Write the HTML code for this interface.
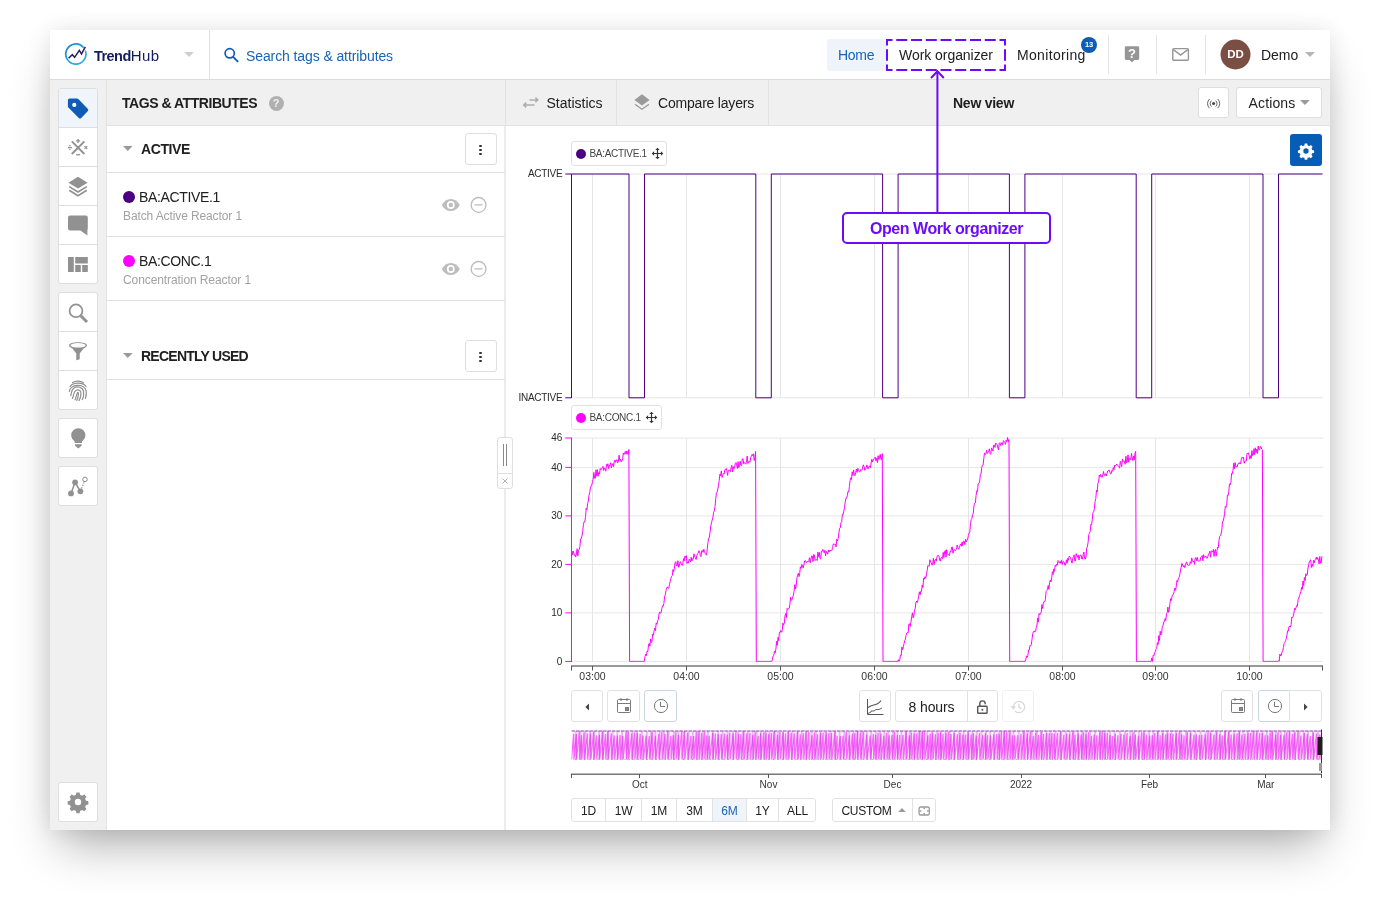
<!DOCTYPE html>
<html lang="en">
<head>
<meta charset="utf-8">
<title>TrendHub</title>
<style>
*{box-sizing:border-box;margin:0;padding:0}
html,body{width:1380px;height:900px;background:#fff;overflow:hidden}
body{position:relative;font-family:"Liberation Sans",sans-serif;color:#202020;font-size:14px}
.a{position:absolute}
#win{left:50px;top:30px;width:1280px;height:800px;background:#fff;box-shadow:0 25px 45px -10px rgba(0,0,0,.31),0 0 22px rgba(0,0,0,.09)}
#hdr{left:50px;top:30px;width:1280px;height:50px;background:#fff;border-bottom:1px solid #dcdcdc}
#side{left:50px;top:80px;width:57px;height:750px;background:#f0f0f0;border-right:1px solid #e2e2e2}
#phead{left:107px;top:80px;width:1223px;height:46px;background:#f0f0f0;border-bottom:1px solid #e2e2e2}
#lpanel{left:107px;top:126px;width:398px;height:704px;background:#fff}
.vdiv{width:1px;background:#e0e0e0}
.hline{height:1px;background:#e2e2e2}
.grp{left:58px;width:40px;background:#fff;border:1px solid #dedede;border-radius:3px;overflow:hidden}
.cell{height:39px;width:38px;border-top:1px solid #dedede;display:flex;align-items:center;justify-content:center}
.cell:first-child{border-top:0;height:38px}
.cell.sel{background:#f0f5fb}
.btn{background:#fff;border:1px solid #dedede;border-radius:3px;display:flex;align-items:center;justify-content:center}
.t{white-space:nowrap;line-height:1}
.rb{top:804.7px;font-size:12px;text-align:center;letter-spacing:-0.2px}
</style>
</head>
<body>
<div id="win" class="a"></div>
<div id="layer" class="a" style="left:0;top:0;width:1380px;height:900px;will-change:transform">
<div id="hdr" class="a"></div>
<div id="side" class="a"></div>
<div id="phead" class="a"></div>
<div id="lpanel" class="a"></div>

<!-- ===== top header ===== -->
<svg class="a" style="left:62px;top:40px" width="28" height="28" viewBox="62 39.5 28 28">
  <defs><linearGradient id="lg" x1="0" y1="0" x2="1" y2="1"><stop offset="0" stop-color="#1b86d2"/><stop offset="1" stop-color="#2bbbe3"/></linearGradient></defs>
  <path d="M83.2 46.6 A10.1 10.1 0 1 0 85.6 50.9" fill="none" stroke="url(#lg)" stroke-width="1.7" stroke-linecap="round"/>
  <path d="M68.6 57.7 L72.3 54.2 L74.6 56.8 L79.3 49.8 L81.5 53.4 L85.3 46.4" fill="none" stroke="#2a215f" stroke-width="1.5" stroke-linejoin="miter"/>
</svg>
<div class="a t" style="left:94px;top:48px;font-size:14.5px;color:#141e5c;letter-spacing:-0.55px"><b>Trend</b><span style="letter-spacing:0.45px;font-size:15px">Hub</span></div>
<svg class="a" style="left:184px;top:52px" width="10" height="5" viewBox="0 0 10 5"><path d="M0 0H10L5 5Z" fill="#cfcfcf"/></svg>
<div class="a vdiv" style="left:209px;top:30px;height:49px;background:#e2e2e2"></div>
<svg class="a" style="left:223px;top:46px" width="18" height="18" viewBox="0 0 18 18"><circle cx="6.7" cy="7.3" r="4.6" fill="none" stroke="#0f5cb6" stroke-width="1.7"/><path d="M10.1 10.8L15.2 15.9" stroke="#0f5cb6" stroke-width="1.9" stroke-linecap="butt"/></svg>
<div class="a t" style="left:246px;top:49px;font-size:14px;color:#1a62b5;letter-spacing:-0.1px">Search tags &amp; attributes</div>

<div class="a" style="left:827px;top:39px;width:60px;height:32px;background:#eff4fa;border-radius:3px"></div>
<div class="a t" style="left:838px;top:48px;font-size:14px;color:#1a62b5;letter-spacing:-0.3px">Home</div>
<div class="a t" style="left:899px;top:48px;font-size:14px;letter-spacing:-0.05px">Work organizer</div>
<div class="a t" style="left:1017px;top:48px;font-size:14px;letter-spacing:0.33px">Monitoring</div>
<div class="a" style="left:1081px;top:37px;width:16px;height:16px;border-radius:8px;background:#0f5cb6"></div>
<div class="a t" style="left:1081px;top:41px;width:16px;text-align:center;font-size:7.5px;font-weight:700;color:#fff;letter-spacing:-0.2px">13</div>
<div class="a vdiv" style="left:1108px;top:35px;height:39px;background:#e4e4e4"></div>
<div class="a vdiv" style="left:1156px;top:35px;height:39px;background:#e4e4e4"></div>
<div class="a vdiv" style="left:1205px;top:35px;height:39px;background:#e4e4e4"></div>
<!-- help -->
<svg class="a" style="left:1123px;top:45px" width="18" height="20" viewBox="0 0 18 20"><path d="M3.2 1.2H14.8A1.4 1.4 0 0 1 16.2 2.6V13.6A1.4 1.4 0 0 1 14.8 15H11.2L9 17.6L6.8 15H3.2A1.4 1.4 0 0 1 1.8 13.6V2.6A1.4 1.4 0 0 1 3.2 1.2Z" fill="#969696"/><text x="9" y="13.2" font-family="Liberation Sans, sans-serif" font-size="13" font-weight="700" fill="#fff" text-anchor="middle">?</text></svg>
<!-- mail -->
<svg class="a" style="left:1171px;top:46px" width="20" height="16" viewBox="0 0 20 16"><rect x="1.8" y="2.6" width="15.6" height="11.6" rx="1" fill="none" stroke="#969696" stroke-width="1.4"/><path d="M2.4 3.6L9.6 9L16.8 3.6" fill="none" stroke="#969696" stroke-width="1.4"/></svg>
<svg class="a" style="left:1218px;top:38px" width="34" height="34" viewBox="0 0 34 34"><circle cx="17.5" cy="16.5" r="15" fill="#7a4e43"/></svg>
<div class="a t" style="left:1220.5px;top:49px;width:30px;text-align:center;font-size:11.5px;font-weight:700;color:#fff">DD</div>
<div class="a t" style="left:1261px;top:48px;font-size:14px;letter-spacing:-0.05px">Demo</div>
<svg class="a" style="left:1305px;top:52px" width="10" height="5" viewBox="0 0 10 5"><path d="M0 0H10L5 5Z" fill="#b5b5b5"/></svg>

<!-- ===== left icon bar ===== -->
<div class="a grp" style="top:88px;height:196px"></div>
<div class="a" style="left:59px;top:89px;width:38px;height:38px;background:#f0f5fb;border-radius:2px 2px 0 0"></div>
<div class="a hline" style="left:59px;top:127px;width:38px;background:#dedede"></div>
<div class="a hline" style="left:59px;top:166px;width:38px;background:#dedede"></div>
<div class="a hline" style="left:59px;top:205px;width:38px;background:#dedede"></div>
<div class="a hline" style="left:59px;top:244px;width:38px;background:#dedede"></div>
<div class="a grp" style="top:292px;height:118px"></div>
<div class="a hline" style="left:59px;top:331px;width:38px;background:#dedede"></div>
<div class="a hline" style="left:59px;top:370px;width:38px;background:#dedede"></div>
<div class="a grp" style="top:418px;height:40px"></div>
<div class="a grp" style="top:466px;height:40px"></div>
<div class="a grp" style="top:782px;height:40px"></div>
<svg class="a" style="left:58px;top:88px" width="40" height="740" viewBox="58 88 40 740">
  <!-- tag -->
  <path d="M69.6 98.6H77.1a1.7 1.7 0 0 1 1.2 .5L87.7 108.8a1.7 1.7 0 0 1 0 2.4L81.2 117.9a1.7 1.7 0 0 1 -2.4 0L68.4 107.6a1.7 1.7 0 0 1 -.5 -1.2V100.3a1.7 1.7 0 0 1 1.7 -1.7Z" fill="#0f5cb6"/>
  <circle cx="74.3" cy="104.9" r="2.1" fill="#fff"/>
  <!-- math cross -->
  <g stroke="#919191" fill="none">
    <path d="M71.8 141.4L84.4 154M84.4 141.4L71.8 154" stroke-width="1.9"/>
    <path d="M76.1 140.9H80.1M78.1 138.9V142.9" stroke-width="1.3"/>
    <path d="M76.1 154.7H80.1" stroke-width="1.3"/>
    <path d="M84.5 146.1L87.3 148.9M87.3 146.1L84.5 148.9" stroke-width="1.2"/>
    <path d="M67.9 147.6H71.9" stroke-width="1.3"/>
  </g>
  <circle cx="69.9" cy="145.8" r=".75" fill="#919191"/><circle cx="69.9" cy="149.4" r=".75" fill="#919191"/>
  <!-- layers -->
  <path d="M78 176.8L87.6 182.7L78 188.6L68.4 182.7Z" fill="#919191"/>
  <path d="M69.2 186.6L78 192L86.8 186.6M69.2 190.3L78 195.7L86.8 190.3" fill="none" stroke="#919191" stroke-width="1.6"/>
  <!-- comment -->
  <path d="M70 215.4H85.8a2 2 0 0 1 2 2V228.6a2 2 0 0 1 -.4 1.2V235.6L80.4 230.6H70a2 2 0 0 1 -2 -2V217.4a2 2 0 0 1 2 -2Z" fill="#919191"/>
  <!-- dashboard -->
  <path d="M68 257h5.8v15H68zM75.2 257h12.6v6.6H75.2zM75.2 265h5.6v7h-5.6zM82.2 265h5.6v7h-5.6z" fill="#919191"/>
  <!-- search -->
  <circle cx="76" cy="310.8" r="6.4" fill="none" stroke="#919191" stroke-width="1.7"/>
  <path d="M80.8 315.8L87 322" stroke="#919191" stroke-width="3" stroke-linecap="butt"/>
  <!-- funnel -->
  <path d="M69 345.5C69 341.3 87 341.3 87 345.5C87 346.6 85.6 347.6 83.6 348.4L79.7 353.4V359.3L76.3 360.2V353.4L72.4 348.4C70.4 347.6 69 346.6 69 345.5Z" fill="#919191"/>
  <ellipse cx="78" cy="345.3" rx="7.6" ry="2.3" fill="#fff"/>
  <!-- fingerprint -->
  <g fill="none" stroke="#919191" stroke-width="1.2" stroke-linecap="round">
    <path d="M72.6 382.6C75.8 380.4 80.6 380.6 83.6 382.9"/>
    <path d="M70 386.6C73.2 382.2 82.6 382 86 386.4"/>
    <path d="M69.4 391.4C69.6 384.2 84.4 382.6 86.2 391C86.6 393.4 86.2 396.2 85.4 398.4"/>
    <path d="M70.8 395.6C71.8 392.8 71 390.4 73.6 388.2C77 385.6 83 387.2 83.6 391.6C84 394.6 83.4 397.2 82.4 399.6"/>
    <path d="M72.4 398.4C74.4 395 73 391.6 76.2 390.2C79 389.2 81.2 391 81 393.6C80.8 396.4 80.2 398.6 79 400.6"/>
    <path d="M75 399.8C76.6 397 76.2 394.6 77.6 392.6C78.4 392.2 78.6 393 78.4 394.4C78.2 396.6 77.8 398.6 76.8 400.4"/>
  </g>
  <!-- bulb -->
  <path d="M78.3 428.2a7.1 7.1 0 0 1 7.1 7.1c0 2.6 -1.5 4.4 -3.4 6.2v1.4h-7.4v-1.4c-1.9 -1.8 -3.4 -3.6 -3.4 -6.2a7.1 7.1 0 0 1 7.1 -7.1Z" fill="#919191"/>
  <path d="M75 444.2h6.6v1.6l-3.3 2.7l-3.3 -2.7Z" fill="#919191"/>
  <!-- graph -->
  <g fill="#919191">
    <circle cx="71" cy="493.4" r="2.9"/><circle cx="75.1" cy="482.3" r="2.9"/><circle cx="80.4" cy="491.3" r="2.9"/>
  </g>
  <path d="M71 493.4L75.1 482.3L80.4 491.3" fill="none" stroke="#919191" stroke-width="1.5"/>
  <path d="M81.6 488.4L84 482.6" fill="none" stroke="#919191" stroke-width="1.3" stroke-dasharray="1.3 1.3"/>
  <circle cx="85" cy="479.4" r="2.3" fill="#fff" stroke="#919191" stroke-width="1"/>
  <!-- gear -->
  <g transform="translate(78 802)">
    <path id="gear" d="M-1.6 -9.5h3.2l.5 2.4a7 7 0 0 1 2 .85l2.1 -1.35l2.25 2.25l-1.35 2.1a7 7 0 0 1 .85 2l2.4 .5v3.2l-2.4 .5a7 7 0 0 1 -.85 2l1.35 2.1l-2.25 2.25l-2.1 -1.35a7 7 0 0 1 -2 .85l-.5 2.4h-3.2l-.5 -2.4a7 7 0 0 1 -2 -.85l-2.1 1.35l-2.25 -2.25l1.35 -2.1a7 7 0 0 1 -.85 -2l-2.4 -.5v-3.2l2.4 -.5a7 7 0 0 1 .85 -2l-1.35 -2.1l2.25 -2.25l2.1 1.35a7 7 0 0 1 2 -.85ZM0 -3.2a3.2 3.2 0 1 0 0 6.4a3.2 3.2 0 1 0 0 -6.4Z" fill="#919191" fill-rule="evenodd"/>
  </g>
</svg>

<!-- ===== tags & attributes panel ===== -->
<div class="a vdiv" style="left:505px;top:80px;height:46px;background:#e2e2e2"></div>
<div class="a" style="left:504px;top:126px;width:2px;height:704px;background:#ececec"></div>
<div class="a t" style="left:122px;top:96px;font-size:14px;font-weight:700;letter-spacing:-0.46px">TAGS &amp; ATTRIBUTES</div>
<div class="a" style="left:268.5px;top:95.5px;width:15px;height:15px;border-radius:7.5px;background:#b0b0b0"></div>
<div class="a t" style="left:268.5px;top:98px;width:15px;text-align:center;font-size:11px;font-weight:700;color:#f0f0f0">?</div>

<svg class="a" style="left:123px;top:146px" width="10" height="5" viewBox="0 0 10 5"><path d="M0 0H9.6L4.8 5Z" fill="#9a9a9a"/></svg>
<div class="a t" style="left:141px;top:142px;font-size:14px;font-weight:700;letter-spacing:-0.39px">ACTIVE</div>
<div class="a btn" style="left:465px;top:133px;width:32px;height:32px"></div>
<div class="a" style="left:479.4px;top:144.8px;width:2.4px;height:2.4px;border-radius:2px;background:#333;box-shadow:0 4px 0 #333,0 8px 0 #333"></div>
<div class="a hline" style="left:107px;top:172px;width:398px"></div>

<div class="a" style="left:122.5px;top:191px;width:12px;height:12px;border-radius:6px;background:#4b0082"></div>
<div class="a t" style="left:139px;top:190px;font-size:14px;letter-spacing:-0.35px">BA:ACTIVE.1</div>
<div class="a t" style="left:123px;top:210px;font-size:12px;color:#a2a2a2;letter-spacing:-0.11px">Batch Active Reactor 1</div>
<svg class="a" style="left:441px;top:196px" width="48" height="18" viewBox="441 196 48 18">
  <path d="M441.8 205C444 201 447 198.9 450.8 198.9C454.6 198.9 457.6 201 459.8 205C457.6 209 454.6 211.1 450.8 211.1C447 211.1 444 209 441.8 205Z" fill="#bdbdbd"/>
  <circle cx="450.8" cy="205" r="3.9" fill="#fff"/><circle cx="450.8" cy="205" r="2.2" fill="#bdbdbd"/>
  <circle cx="478.6" cy="204.9" r="7.4" fill="none" stroke="#bdbdbd" stroke-width="1.3"/><path d="M474.6 204.9H482.6" stroke="#bdbdbd" stroke-width="1.3"/>
</svg>
<div class="a hline" style="left:107px;top:236px;width:398px"></div>

<div class="a" style="left:122.5px;top:255px;width:12px;height:12px;border-radius:6px;background:#ff00ff"></div>
<div class="a t" style="left:139px;top:254px;font-size:14px;letter-spacing:-0.35px">BA:CONC.1</div>
<div class="a t" style="left:123px;top:274px;font-size:12px;color:#a2a2a2;letter-spacing:-0.09px">Concentration Reactor 1</div>
<svg class="a" style="left:441px;top:260px" width="48" height="18" viewBox="441 196 48 18">
  <path d="M441.8 205C444 201 447 198.9 450.8 198.9C454.6 198.9 457.6 201 459.8 205C457.6 209 454.6 211.1 450.8 211.1C447 211.1 444 209 441.8 205Z" fill="#bdbdbd"/>
  <circle cx="450.8" cy="205" r="3.9" fill="#fff"/><circle cx="450.8" cy="205" r="2.2" fill="#bdbdbd"/>
  <circle cx="478.6" cy="204.9" r="7.4" fill="none" stroke="#bdbdbd" stroke-width="1.3"/><path d="M474.6 204.9H482.6" stroke="#bdbdbd" stroke-width="1.3"/>
</svg>
<div class="a hline" style="left:107px;top:300px;width:398px"></div>

<svg class="a" style="left:123px;top:353px" width="10" height="5" viewBox="0 0 10 5"><path d="M0 0H9.6L4.8 5Z" fill="#9a9a9a"/></svg>
<div class="a t" style="left:141px;top:349px;font-size:14px;font-weight:700;letter-spacing:-0.75px">RECENTLY USED</div>
<div class="a btn" style="left:465px;top:340px;width:32px;height:32px"></div>
<div class="a" style="left:479.4px;top:351.8px;width:2.4px;height:2.4px;border-radius:2px;background:#333;box-shadow:0 4px 0 #333,0 8px 0 #333"></div>
<div class="a hline" style="left:107px;top:379px;width:398px"></div>

<!-- splitter handle -->
<div class="a" style="left:497px;top:437px;width:16px;height:52px;background:#fff;border:1px solid #dedede;border-radius:3px"></div>
<div class="a hline" style="left:498px;top:473px;width:14px;background:#dedede"></div>
<div class="a" style="left:503px;top:444px;width:1px;height:22px;background:#8a8a8a"></div>
<div class="a" style="left:506px;top:444px;width:1px;height:22px;background:#8a8a8a"></div>
<svg class="a" style="left:501px;top:477px" width="8" height="8" viewBox="0 0 8 8"><path d="M1.5 1.5L6.5 6.5M6.5 1.5L1.5 6.5" stroke="#a8a8a8" stroke-width=".9"/></svg>

<!-- ===== chart toolbar ===== -->
<div class="a vdiv" style="left:616px;top:80px;height:45px;background:#e2e2e2"></div>
<div class="a vdiv" style="left:768px;top:80px;height:45px;background:#e2e2e2"></div>
<svg class="a" style="left:522px;top:95px" width="18" height="14" viewBox="522 95 18 14"><g fill="none" stroke="#adadad" stroke-width="1.5"><path d="M529.5 99.9H537.6M535.4 97.5L537.8 99.9L535.4 102.3"/><path d="M534.5 105H524M526.2 102.6L523.8 105L526.2 107.4"/></g></svg>
<div class="a t" style="left:546.5px;top:96px;font-size:14px">Statistics</div>
<svg class="a" style="left:633px;top:93px" width="18" height="18" viewBox="633 93 18 18"><path d="M642 94.3L649.6 99.9L642 105.5L634.4 99.9Z" fill="#9a9a9a"/><path d="M635 104.2L642 109.3L649 104.2" fill="none" stroke="#9a9a9a" stroke-width="1.3"/></svg>
<div class="a t" style="left:658px;top:96px;font-size:14px;letter-spacing:-0.2px">Compare layers</div>
<div class="a t" style="left:953px;top:96px;font-size:14px;font-weight:700;letter-spacing:-0.25px">New view</div>
<div class="a btn" style="left:1198px;top:87px;width:31px;height:31px;border-color:#dedede"></div>
<svg class="a" style="left:1205px;top:96px" width="18" height="16" viewBox="1205 96 18 16"><circle cx="1213.6" cy="103.6" r="1.5" fill="#444"/><g fill="none" stroke="#555" stroke-width=".9" stroke-linecap="round"><path d="M1211.2 100.9A3.7 3.7 0 0 0 1211.2 106.3M1216 100.9A3.7 3.7 0 0 1 1216 106.3"/><path d="M1209.2 99.3A6 6 0 0 0 1209.2 107.9M1218 99.3A6 6 0 0 1 1218 107.9"/></g></svg>
<div class="a btn" style="left:1236px;top:87px;width:86px;height:31px;border-color:#dedede"></div>
<div class="a t" style="left:1248.5px;top:96px;font-size:14px;letter-spacing:0.15px">Actions</div>
<svg class="a" style="left:1300px;top:100px" width="10" height="5" viewBox="0 0 10 5"><path d="M0 0H9.8L4.9 5Z" fill="#9a9a9a"/></svg>
<div class="a" style="left:1290px;top:134px;width:32px;height:32px;border-radius:3px;background:#075db5"></div>
<svg class="a" style="left:1296px;top:141px" width="20" height="20" viewBox="-10 -10 20 20"><path transform="scale(0.78)" d="M-1.6 -9.5h3.2l.5 2.4a7 7 0 0 1 2 .85l2.1 -1.35l2.25 2.25l-1.35 2.1a7 7 0 0 1 .85 2l2.4 .5v3.2l-2.4 .5a7 7 0 0 1 -.85 2l1.35 2.1l-2.25 2.25l-2.1 -1.35a7 7 0 0 1 -2 .85l-.5 2.4h-3.2l-.5 -2.4a7 7 0 0 1 -2 -.85l-2.1 1.35l-2.25 -2.25l1.35 -2.1a7 7 0 0 1 -.85 -2l-2.4 -.5v-3.2l2.4 -.5a7 7 0 0 1 .85 -2l-1.35 -2.1l2.25 -2.25l2.1 1.35a7 7 0 0 1 2 -.85ZM0 -3.4a3.4 3.4 0 1 0 0 6.8a3.4 3.4 0 1 0 0 -6.8Z" fill="#fff" fill-rule="evenodd"/></svg>

<!-- ===== charts ===== -->
<svg class="a" style="left:506px;top:126px" width="824" height="704" viewBox="506 126 824 704" font-family="Liberation Sans, sans-serif">
  <!-- grid chart 1 -->
  <g stroke="#e6e6e6" stroke-width="1" fill="none">
    <path d="M592.5 174V397.8M686.5 174V397.8M780.5 174V397.8M874.5 174V397.8M968.5 174V397.8M1062.5 174V397.8M1155.5 174V397.8M1249.5 174V397.8"/>
    <path d="M571 174H1323M571 397.8H1323"/>
    <path d="M592.5 438V661.4M686.5 438V661.4M780.5 438V661.4M874.5 438V661.4M968.5 438V661.4M1062.5 438V661.4M1155.5 438V661.4M1249.5 438V661.4"/>
    <path d="M571 438H1323M571 467.4H1323M571 515.9H1323M571 564.4H1323M571 612.9H1323M571 661.4H1323"/>
  </g>
  <!-- y ticks -->
  <path d="M565.3 174H571.5M565.3 397.8H571.5" stroke="#4b0082" stroke-width="1" fill="none"/>
  <path d="M571.5 174V397.8" stroke="#4b0082" stroke-width="1" fill="none" opacity=".5"/>
  <path d="M565.3 438H571.5M565.3 467.4H571.5M565.3 515.9H571.5M565.3 564.4H571.5M565.3 612.9H571.5M565.3 661.4H571.5" stroke="#ff00ff" stroke-width="1" fill="none"/>
  <path d="M571.5 437.5V662" stroke="#ff00ff" stroke-width="1" fill="none"/>
  <g font-size="10" fill="#2a2a2a" text-anchor="end">
    <text x="562.3" y="177.4" letter-spacing="-0.3">ACTIVE</text>
    <text x="562.3" y="401.2" letter-spacing="-0.3">INACTIVE</text>
    <text x="562.3" y="441.4">46</text>
    <text x="562.3" y="470.8">40</text>
    <text x="562.3" y="519.3">30</text>
    <text x="562.3" y="567.8">20</text>
    <text x="562.3" y="616.3">10</text>
    <text x="562.3" y="664.8">0</text>
  </g>
  <!-- series -->
  <path d="M571.5 397.8 L571.5 174.0 L629.0 174.0 L629.0 397.8 L644.5 397.8 L644.5 174.0 L755.8 174.0 L755.8 397.8 L771.3 397.8 L771.3 174.0 L882.6 174.0 L882.6 397.8 L898.1 397.8 L898.1 174.0 L1009.4 174.0 L1009.4 397.8 L1024.9 397.8 L1024.9 174.0 L1136.2 174.0 L1136.2 397.8 L1151.7 397.8 L1151.7 174.0 L1263.0 174.0 L1263.0 397.8 L1278.5 397.8 L1278.5 174.0 L1322.5 174.0" fill="none" stroke="#4b0082" stroke-width="1" stroke-linejoin="miter"/>
  <path d="M571.5 551.8 L572.2 555.2 L572.9 551.0 L573.6 552.1 L574.3 555.3 L575.0 554.7 L575.7 557.0 L576.4 553.9 L577.1 548.7 L577.8 555.9 L578.5 550.3 L579.2 549.8 L579.9 546.4 L580.6 539.0 L581.3 538.2 L582.0 535.9 L582.7 531.6 L583.4 524.7 L584.1 521.6 L584.8 521.9 L585.5 516.8 L586.2 508.2 L586.9 509.7 L587.6 503.8 L588.3 501.2 L589.0 495.2 L589.7 492.8 L590.4 488.0 L591.1 486.1 L591.8 484.9 L592.5 481.4 L593.2 479.3 L593.9 472.4 L594.6 478.2 L595.3 478.5 L596.0 469.8 L596.7 476.1 L597.4 469.6 L598.1 476.2 L598.8 472.5 L599.5 474.1 L600.2 468.4 L600.9 469.8 L601.6 469.2 L602.3 467.7 L603.0 466.3 L603.7 470.4 L604.4 467.8 L605.1 468.7 L605.8 471.2 L606.5 464.4 L607.2 466.1 L607.9 463.7 L608.6 468.6 L609.3 465.3 L610.0 465.5 L610.7 462.7 L611.4 468.0 L612.1 465.2 L612.8 463.6 L613.5 466.7 L614.2 462.1 L614.9 460.1 L615.6 462.4 L616.3 460.0 L617.0 459.9 L617.7 462.9 L618.4 461.2 L619.1 455.2 L619.8 460.5 L620.5 459.2 L621.2 461.8 L621.9 460.2 L622.6 460.2 L623.3 453.1 L624.0 454.5 L624.7 452.7 L625.4 451.3 L626.1 454.2 L626.8 450.9 L627.5 454.0 L628.2 454.5 L628.9 449.5 L629.6 661.4 L630.3 661.4 L631.0 661.4 L631.7 661.4 L632.4 661.4 L633.1 661.4 L633.8 661.4 L634.5 661.4 L635.2 661.4 L635.9 661.4 L636.6 661.4 L637.3 661.4 L638.0 661.4 L638.7 661.4 L639.4 661.4 L640.1 661.4 L640.8 661.4 L641.5 661.4 L642.2 661.4 L642.9 661.4 L643.6 661.4 L644.3 661.4 L645.0 656.7 L645.7 654.2 L646.4 655.6 L647.1 651.1 L647.8 651.8 L648.5 645.0 L649.2 643.4 L649.9 646.1 L650.6 638.9 L651.3 642.6 L652.0 641.1 L652.7 634.0 L653.4 635.1 L654.1 631.2 L654.8 628.1 L655.5 630.5 L656.2 622.9 L656.9 624.3 L657.6 620.9 L658.3 619.4 L659.0 614.2 L659.7 611.9 L660.4 613.3 L661.1 612.5 L661.8 608.8 L662.5 605.8 L663.2 606.2 L663.9 603.4 L664.6 596.5 L665.3 594.8 L666.0 590.4 L666.7 588.2 L667.4 586.8 L668.1 588.5 L668.8 588.0 L669.5 584.6 L670.2 581.3 L670.9 578.6 L671.6 576.3 L672.3 575.5 L673.0 569.5 L673.7 571.7 L674.4 568.1 L675.1 562.6 L675.8 561.6 L676.5 565.7 L677.2 565.9 L677.9 560.7 L678.6 567.3 L679.3 566.0 L680.0 562.2 L680.7 561.8 L681.4 564.8 L682.1 565.5 L682.8 563.8 L683.5 558.6 L684.2 560.9 L684.9 556.2 L685.6 557.6 L686.3 555.6 L687.0 563.5 L687.7 561.9 L688.4 563.1 L689.1 559.1 L689.8 559.6 L690.5 561.9 L691.2 557.2 L691.9 560.9 L692.6 558.7 L693.3 558.9 L694.0 553.8 L694.7 556.8 L695.4 557.9 L696.1 559.5 L696.8 555.8 L697.5 553.8 L698.2 553.1 L698.9 550.7 L699.6 551.3 L700.3 555.9 L701.0 556.6 L701.7 550.8 L702.4 550.3 L703.1 552.4 L703.8 549.3 L704.5 551.4 L705.2 553.5 L705.9 554.2 L706.6 555.2 L707.3 548.1 L708.0 542.3 L708.7 538.2 L709.4 537.2 L710.1 531.8 L710.8 525.9 L711.5 522.7 L712.2 520.1 L712.9 517.3 L713.6 512.5 L714.3 510.8 L715.0 506.7 L715.7 499.3 L716.4 493.1 L717.1 492.1 L717.8 489.0 L718.5 485.3 L719.2 480.6 L719.9 474.2 L720.6 475.7 L721.3 470.9 L722.0 477.5 L722.7 475.7 L723.4 473.5 L724.1 474.1 L724.8 469.8 L725.5 469.7 L726.2 468.4 L726.9 470.7 L727.6 475.4 L728.3 470.3 L729.0 470.1 L729.7 470.2 L730.4 471.6 L731.1 467.5 L731.8 465.3 L732.5 472.0 L733.2 466.7 L733.9 468.9 L734.6 467.2 L735.3 463.5 L736.0 462.5 L736.7 464.9 L737.4 468.4 L738.1 461.7 L738.8 467.7 L739.5 465.6 L740.2 461.3 L740.9 465.4 L741.6 465.4 L742.3 459.0 L743.0 458.7 L743.7 463.8 L744.4 462.7 L745.1 463.3 L745.8 464.2 L746.5 462.7 L747.2 456.0 L747.9 463.4 L748.6 461.7 L749.3 461.6 L750.0 462.2 L750.7 457.9 L751.4 455.7 L752.1 454.4 L752.8 455.8 L753.5 453.8 L754.2 460.5 L754.9 457.7 L755.6 451.4 L756.3 661.4 L757.0 661.4 L757.7 661.4 L758.4 661.4 L759.1 661.4 L759.8 661.4 L760.5 661.4 L761.2 661.4 L761.9 661.4 L762.6 661.4 L763.3 661.4 L764.0 661.4 L764.7 661.4 L765.4 661.4 L766.1 661.4 L766.8 661.4 L767.5 661.4 L768.2 661.4 L768.9 661.4 L769.6 661.4 L770.3 661.4 L771.0 661.4 L771.7 661.4 L772.4 659.8 L773.1 655.9 L773.8 655.4 L774.5 651.0 L775.2 652.7 L775.9 649.1 L776.6 641.3 L777.3 645.4 L778.0 637.3 L778.7 640.7 L779.4 632.2 L780.1 632.5 L780.8 630.5 L781.5 632.3 L782.2 630.8 L782.9 623.1 L783.6 625.4 L784.3 623.1 L785.0 616.0 L785.7 613.4 L786.4 617.7 L787.1 608.4 L787.8 609.5 L788.5 608.5 L789.2 608.4 L789.9 604.1 L790.6 597.2 L791.3 600.5 L792.0 599.5 L792.7 597.2 L793.4 595.1 L794.1 591.2 L794.8 584.6 L795.5 589.0 L796.2 585.9 L796.9 577.9 L797.6 575.3 L798.3 573.2 L799.0 576.7 L799.7 573.7 L800.4 566.8 L801.1 568.3 L801.8 564.4 L802.5 565.9 L803.2 568.1 L803.9 564.9 L804.6 561.0 L805.3 560.4 L806.0 561.9 L806.7 562.4 L807.4 561.4 L808.1 561.9 L808.8 560.7 L809.5 557.7 L810.2 562.9 L810.9 559.1 L811.6 555.8 L812.3 556.1 L813.0 561.6 L813.7 554.4 L814.4 555.1 L815.1 560.6 L815.8 559.4 L816.5 559.6 L817.2 560.5 L817.9 552.1 L818.6 556.7 L819.3 552.3 L820.0 558.5 L820.7 559.1 L821.4 551.2 L822.1 551.5 L822.8 549.4 L823.5 551.7 L824.2 552.8 L824.9 550.3 L825.6 555.8 L826.3 551.5 L827.0 552.0 L827.7 554.2 L828.4 549.9 L829.1 552.0 L829.8 550.0 L830.5 550.8 L831.2 550.9 L831.9 550.2 L832.6 547.7 L833.3 544.0 L834.0 544.1 L834.7 544.4 L835.4 544.2 L836.1 547.0 L836.8 539.2 L837.5 540.9 L838.2 538.7 L838.9 533.0 L839.6 528.3 L840.3 527.8 L841.0 522.6 L841.7 521.9 L842.4 514.2 L843.1 514.5 L843.8 511.2 L844.5 507.7 L845.2 502.2 L845.9 498.3 L846.6 498.3 L847.3 495.7 L848.0 491.4 L848.7 492.0 L849.4 486.4 L850.1 480.4 L850.8 477.8 L851.5 479.5 L852.2 471.8 L852.9 475.5 L853.6 469.9 L854.3 474.8 L855.0 475.7 L855.7 472.3 L856.4 469.0 L857.1 472.5 L857.8 468.3 L858.5 469.2 L859.2 471.8 L859.9 471.9 L860.6 469.7 L861.3 470.2 L862.0 470.0 L862.7 467.1 L863.4 464.8 L864.1 466.9 L864.8 470.3 L865.5 469.2 L866.2 467.4 L866.9 464.9 L867.6 468.6 L868.3 468.7 L869.0 466.2 L869.7 466.1 L870.4 467.8 L871.1 463.0 L871.8 459.2 L872.5 462.1 L873.2 459.9 L873.9 458.7 L874.6 458.2 L875.3 457.1 L876.0 460.8 L876.7 458.3 L877.4 462.7 L878.1 455.7 L878.8 459.6 L879.5 458.4 L880.2 454.3 L880.9 459.2 L881.6 459.6 L882.3 453.6 L883.0 661.4 L883.7 661.4 L884.4 661.4 L885.1 661.4 L885.8 661.4 L886.5 661.4 L887.2 661.4 L887.9 661.4 L888.6 661.4 L889.3 661.4 L890.0 661.4 L890.7 661.4 L891.4 661.4 L892.1 661.4 L892.8 661.4 L893.5 661.4 L894.2 661.4 L894.9 661.4 L895.6 661.4 L896.3 661.4 L897.0 661.4 L897.7 661.4 L898.4 659.7 L899.1 661.4 L899.8 659.7 L900.5 655.0 L901.2 655.5 L901.9 646.9 L902.6 649.8 L903.3 646.9 L904.0 643.8 L904.7 640.7 L905.4 639.1 L906.1 635.4 L906.8 632.9 L907.5 632.5 L908.2 632.9 L908.9 623.9 L909.6 623.9 L910.3 626.5 L911.0 621.5 L911.7 616.9 L912.4 612.8 L913.1 617.8 L913.8 616.1 L914.5 610.2 L915.2 608.5 L915.9 602.6 L916.6 601.0 L917.3 602.6 L918.0 599.8 L918.7 596.3 L919.4 591.8 L920.1 594.9 L920.8 591.2 L921.5 591.4 L922.2 584.9 L922.9 587.5 L923.6 578.2 L924.3 579.2 L925.0 576.7 L925.7 578.3 L926.4 574.9 L927.1 570.9 L927.8 565.7 L928.5 566.0 L929.2 566.2 L929.9 559.7 L930.6 562.0 L931.3 562.8 L932.0 565.2 L932.7 563.9 L933.4 558.2 L934.1 564.5 L934.8 560.5 L935.5 559.3 L936.2 561.2 L936.9 557.1 L937.6 555.5 L938.3 555.5 L939.0 556.1 L939.7 560.3 L940.4 561.1 L941.1 557.4 L941.8 558.0 L942.5 558.6 L943.2 552.3 L943.9 557.6 L944.6 551.8 L945.3 550.4 L946.0 557.1 L946.7 549.7 L947.4 553.8 L948.1 554.9 L948.8 554.7 L949.5 555.6 L950.2 551.1 L950.9 551.7 L951.6 547.2 L952.3 546.9 L953.0 553.2 L953.7 549.8 L954.4 549.4 L955.1 550.8 L955.8 549.8 L956.5 549.2 L957.2 545.0 L957.9 547.7 L958.6 549.2 L959.3 547.8 L960.0 545.4 L960.7 543.9 L961.4 546.3 L962.1 541.9 L962.8 545.7 L963.5 541.2 L964.2 541.3 L964.9 544.7 L965.6 539.2 L966.3 541.9 L967.0 540.2 L967.7 539.0 L968.4 535.3 L969.1 533.0 L969.8 532.1 L970.5 523.6 L971.2 519.6 L971.9 518.6 L972.6 514.5 L973.3 513.1 L974.0 505.3 L974.7 503.2 L975.4 502.9 L976.1 495.3 L976.8 490.7 L977.5 491.5 L978.2 483.6 L978.9 483.5 L979.6 482.1 L980.3 474.9 L981.0 474.0 L981.7 467.8 L982.4 465.3 L983.1 465.0 L983.8 458.6 L984.5 452.9 L985.2 454.6 L985.9 453.6 L986.6 450.3 L987.3 453.5 L988.0 452.6 L988.7 451.3 L989.4 448.8 L990.1 453.7 L990.8 454.2 L991.5 447.9 L992.2 449.3 L992.9 451.0 L993.6 445.4 L994.3 445.0 L995.0 447.5 L995.7 443.1 L996.4 444.0 L997.1 444.3 L997.8 447.8 L998.5 449.8 L999.2 443.5 L999.9 442.6 L1000.6 445.5 L1001.3 443.9 L1002.0 442.6 L1002.7 444.9 L1003.4 440.6 L1004.1 441.3 L1004.8 442.4 L1005.5 444.3 L1006.2 440.0 L1006.9 441.5 L1007.6 437.5 L1008.3 441.9 L1009.0 439.5 L1009.7 661.4 L1010.4 661.4 L1011.1 661.4 L1011.8 661.4 L1012.5 661.4 L1013.2 661.4 L1013.9 661.4 L1014.6 661.4 L1015.3 661.4 L1016.0 661.4 L1016.7 661.4 L1017.4 661.4 L1018.1 661.4 L1018.8 661.4 L1019.5 661.4 L1020.2 661.4 L1020.9 661.4 L1021.6 661.4 L1022.3 661.4 L1023.0 661.4 L1023.7 661.4 L1024.4 661.4 L1025.1 661.4 L1025.8 659.3 L1026.5 655.8 L1027.2 657.3 L1027.9 655.5 L1028.6 650.0 L1029.3 649.9 L1030.0 645.4 L1030.7 645.8 L1031.4 644.2 L1032.1 638.6 L1032.8 633.4 L1033.5 631.6 L1034.2 632.2 L1034.9 630.9 L1035.6 631.3 L1036.3 627.5 L1037.0 625.0 L1037.7 617.9 L1038.4 622.1 L1039.1 613.5 L1039.8 615.0 L1040.5 613.1 L1041.2 612.2 L1041.9 604.6 L1042.6 608.5 L1043.3 603.3 L1044.0 601.6 L1044.7 601.8 L1045.4 599.4 L1046.1 591.3 L1046.8 590.6 L1047.5 588.9 L1048.2 585.4 L1048.9 589.4 L1049.6 582.5 L1050.3 580.0 L1051.0 581.9 L1051.7 577.9 L1052.4 571.7 L1053.1 574.5 L1053.8 568.9 L1054.5 571.4 L1055.2 565.3 L1055.9 566.4 L1056.6 564.1 L1057.3 565.1 L1058.0 560.5 L1058.7 561.4 L1059.4 563.2 L1060.1 561.4 L1060.8 563.4 L1061.5 559.9 L1062.2 564.5 L1062.9 561.8 L1063.6 561.2 L1064.3 562.7 L1065.0 565.4 L1065.7 564.1 L1066.4 559.8 L1067.1 563.3 L1067.8 558.3 L1068.5 560.3 L1069.2 556.1 L1069.9 556.8 L1070.6 557.7 L1071.3 560.5 L1072.0 563.2 L1072.7 558.5 L1073.4 556.6 L1074.1 554.8 L1074.8 560.9 L1075.5 561.0 L1076.2 553.6 L1076.9 555.5 L1077.6 557.5 L1078.3 555.1 L1079.0 560.0 L1079.7 556.3 L1080.4 555.0 L1081.1 555.3 L1081.8 559.0 L1082.5 559.0 L1083.2 554.5 L1083.9 552.0 L1084.6 558.3 L1085.3 559.2 L1086.0 557.0 L1086.7 548.1 L1087.4 546.8 L1088.1 542.3 L1088.8 534.6 L1089.5 533.1 L1090.2 531.4 L1090.9 524.4 L1091.6 525.1 L1092.3 519.2 L1093.0 512.3 L1093.7 511.8 L1094.4 508.7 L1095.1 501.4 L1095.8 498.6 L1096.5 490.2 L1097.2 492.0 L1097.9 483.2 L1098.6 482.0 L1099.3 475.1 L1100.0 476.7 L1100.7 474.4 L1101.4 476.9 L1102.1 477.4 L1102.8 475.0 L1103.5 471.5 L1104.2 475.1 L1104.9 475.6 L1105.6 473.6 L1106.3 476.0 L1107.0 473.6 L1107.7 470.9 L1108.4 470.8 L1109.1 469.9 L1109.8 472.1 L1110.5 474.0 L1111.2 473.6 L1111.9 470.4 L1112.6 471.3 L1113.3 467.6 L1114.0 469.8 L1114.7 465.1 L1115.4 466.0 L1116.1 465.1 L1116.8 464.0 L1117.5 465.5 L1118.2 465.9 L1118.9 466.5 L1119.6 468.2 L1120.3 461.4 L1121.0 463.5 L1121.7 466.6 L1122.4 458.9 L1123.1 461.5 L1123.8 460.7 L1124.5 461.9 L1125.2 464.2 L1125.9 456.2 L1126.6 463.0 L1127.3 460.9 L1128.0 454.9 L1128.7 462.2 L1129.4 458.4 L1130.1 458.2 L1130.8 459.8 L1131.5 453.4 L1132.2 457.5 L1132.9 460.6 L1133.6 456.1 L1134.3 459.8 L1135.0 453.2 L1135.7 451.4 L1136.4 661.4 L1137.1 661.4 L1137.8 661.4 L1138.5 661.4 L1139.2 661.4 L1139.9 661.4 L1140.6 661.4 L1141.3 661.4 L1142.0 661.4 L1142.7 661.4 L1143.4 661.4 L1144.1 661.4 L1144.8 661.4 L1145.5 661.4 L1146.2 661.4 L1146.9 661.4 L1147.6 661.4 L1148.3 661.4 L1149.0 661.4 L1149.7 661.4 L1150.4 661.4 L1151.1 661.4 L1151.8 657.9 L1152.5 661.4 L1153.2 655.3 L1153.9 656.0 L1154.6 652.5 L1155.3 651.7 L1156.0 649.5 L1156.7 648.6 L1157.4 642.6 L1158.1 644.6 L1158.8 635.6 L1159.5 640.5 L1160.2 631.2 L1160.9 635.0 L1161.6 633.7 L1162.3 626.3 L1163.0 625.8 L1163.7 621.8 L1164.4 621.6 L1165.1 618.5 L1165.8 620.5 L1166.5 613.7 L1167.2 612.8 L1167.9 607.1 L1168.6 612.4 L1169.3 609.7 L1170.0 602.8 L1170.7 598.6 L1171.4 600.4 L1172.1 595.9 L1172.8 594.9 L1173.5 594.0 L1174.2 591.3 L1174.9 588.0 L1175.6 590.3 L1176.3 585.9 L1177.0 580.4 L1177.7 581.9 L1178.4 578.1 L1179.1 577.6 L1179.8 574.6 L1180.5 570.1 L1181.2 567.2 L1181.9 563.4 L1182.6 564.9 L1183.3 566.8 L1184.0 565.4 L1184.7 567.6 L1185.4 565.7 L1186.1 562.5 L1186.8 562.0 L1187.5 565.0 L1188.2 565.2 L1188.9 565.7 L1189.6 564.8 L1190.3 561.7 L1191.0 563.6 L1191.7 557.9 L1192.4 560.4 L1193.1 562.1 L1193.8 561.1 L1194.5 564.3 L1195.2 558.0 L1195.9 557.6 L1196.6 560.7 L1197.3 557.3 L1198.0 561.0 L1198.7 561.2 L1199.4 560.9 L1200.1 560.9 L1200.8 557.1 L1201.5 556.6 L1202.2 555.6 L1202.9 560.8 L1203.6 554.7 L1204.3 557.0 L1205.0 557.6 L1205.7 556.3 L1206.4 556.7 L1207.1 558.4 L1207.8 556.5 L1208.5 554.1 L1209.2 553.2 L1209.9 551.2 L1210.6 557.3 L1211.3 550.9 L1212.0 551.5 L1212.7 552.0 L1213.4 549.4 L1214.1 556.5 L1214.8 550.7 L1215.5 549.4 L1216.2 555.9 L1216.9 551.6 L1217.6 547.1 L1218.3 547.8 L1219.0 540.3 L1219.7 536.3 L1220.4 535.7 L1221.1 534.0 L1221.8 529.8 L1222.5 521.9 L1223.2 521.0 L1223.9 518.0 L1224.6 513.4 L1225.3 506.4 L1226.0 507.3 L1226.7 505.2 L1227.4 495.1 L1228.1 495.7 L1228.8 491.5 L1229.5 483.8 L1230.2 484.8 L1230.9 482.4 L1231.6 473.3 L1232.3 473.9 L1233.0 470.4 L1233.7 463.2 L1234.4 468.9 L1235.1 462.5 L1235.8 467.0 L1236.5 466.8 L1237.2 467.0 L1237.9 463.7 L1238.6 463.0 L1239.3 463.9 L1240.0 462.5 L1240.7 463.8 L1241.4 458.6 L1242.1 457.2 L1242.8 458.3 L1243.5 457.2 L1244.2 463.3 L1244.9 461.2 L1245.6 461.1 L1246.3 461.0 L1247.0 453.4 L1247.7 453.5 L1248.4 452.9 L1249.1 455.5 L1249.8 458.9 L1250.5 455.6 L1251.2 458.4 L1251.9 450.5 L1252.6 455.6 L1253.3 454.9 L1254.0 448.6 L1254.7 454.6 L1255.4 447.8 L1256.1 452.6 L1256.8 449.1 L1257.5 453.4 L1258.2 446.0 L1258.9 449.9 L1259.6 449.8 L1260.3 446.6 L1261.0 446.7 L1261.7 449.2 L1262.4 449.8 L1263.1 661.4 L1263.8 661.4 L1264.5 661.4 L1265.2 661.4 L1265.9 661.4 L1266.6 661.4 L1267.3 661.4 L1268.0 661.4 L1268.7 661.4 L1269.4 661.4 L1270.1 661.4 L1270.8 661.4 L1271.5 661.4 L1272.2 661.4 L1272.9 661.4 L1273.6 661.4 L1274.3 661.4 L1275.0 661.4 L1275.7 661.4 L1276.4 661.4 L1277.1 661.4 L1277.8 661.4 L1278.5 660.8 L1279.2 661.4 L1279.9 654.1 L1280.6 656.0 L1281.3 655.2 L1282.0 651.8 L1282.7 651.3 L1283.4 647.5 L1284.1 643.5 L1284.8 642.4 L1285.5 640.8 L1286.2 638.9 L1286.9 635.2 L1287.6 630.8 L1288.3 631.2 L1289.0 626.5 L1289.7 626.5 L1290.4 627.1 L1291.1 624.5 L1291.8 617.1 L1292.5 617.8 L1293.2 616.3 L1293.9 613.1 L1294.6 608.3 L1295.3 609.8 L1296.0 607.7 L1296.7 605.5 L1297.4 606.1 L1298.1 599.7 L1298.8 598.0 L1299.5 595.7 L1300.2 593.9 L1300.9 591.5 L1301.6 587.4 L1302.3 589.4 L1303.0 581.0 L1303.7 585.5 L1304.4 577.5 L1305.1 580.7 L1305.8 573.7 L1306.5 575.6 L1307.2 574.9 L1307.9 569.1 L1308.6 564.6 L1309.3 562.3 L1310.0 560.9 L1310.7 559.7 L1311.4 567.5 L1312.1 564.3 L1312.8 566.4 L1313.5 560.4 L1314.2 562.8 L1314.9 559.9 L1315.6 559.2 L1316.3 557.1 L1317.0 559.6 L1317.7 557.6 L1318.4 560.1 L1319.1 563.9 L1319.8 556.5 L1320.5 563.2 L1321.2 563.0 L1321.9 556.2" fill="none" stroke="#ff00ff" stroke-width="1" stroke-linejoin="round"/>
  <!-- x axis -->
  <path d="M571 666H1323" stroke="#777" stroke-width="1.6" fill="none"/>
  <path d="M571.5 666V670.5M592.5 666V670.5M686.5 666V670.5M780.5 666V670.5M874.5 666V670.5M968.5 666V670.5M1062.5 666V670.5M1155.5 666V670.5M1249.5 666V670.5M1322.5 666V670.5" stroke="#555" stroke-width="1" fill="none"/>
  <g font-size="10.5" fill="#333" text-anchor="middle">
    <text x="592.5" y="680.4">03:00</text><text x="686.5" y="680.4">04:00</text><text x="780.5" y="680.4">05:00</text><text x="874.5" y="680.4">06:00</text>
    <text x="968.5" y="680.4">07:00</text><text x="1062.5" y="680.4">08:00</text><text x="1155.5" y="680.4">09:00</text><text x="1249.5" y="680.4">10:00</text>
  </g>
  <!-- overview -->
  <clipPath id="ovc"><rect x="571.5" y="730" width="750" height="30.2"/></clipPath>
  <g clip-path="url(#ovc)">
  <rect x="571.5" y="730.5" width="750" height="29.5" fill="#fff0ff"/>
  <path d="M571.5 759.5 L573.7 733.7 L574.0 759.5 L576.3 734.0 L576.6 759.5 L579.3 731.3 L579.6 759.5 L581.5 735.2 L581.8 759.5 L584.0 732.2 L584.3 759.5 L587.4 733.4 L587.7 759.5 L590.6 733.4 L590.9 759.5 L593.6 731.8 L593.9 759.5 L596.5 735.3 L596.8 759.5 L599.4 734.7 L599.7 759.5 L602.4 731.3 L602.7 759.5 L605.5 734.0 L605.8 759.5 L608.0 731.2 L608.3 759.5 L611.3 733.4 L611.6 759.5 L614.3 735.4 L614.6 759.5 L617.4 735.6 L617.7 759.5 L620.1 735.0 L620.4 759.5 L622.8 735.7 L623.1 759.5 L626.1 731.5 L626.4 759.5 L628.4 732.1 L628.7 759.5 L631.8 733.2 L632.1 759.5 L634.7 732.5 L635.0 759.5 L637.5 732.9 L637.8 759.5 L640.2 733.9 L640.5 759.5 L643.1 735.5 L643.4 759.5 L646.1 735.6 L646.4 759.5 L649.3 736.0 L649.6 759.5 L652.3 731.8 L652.6 759.5 L655.5 735.8 L655.8 759.5 L658.8 733.8 L659.1 759.5 L661.9 732.1 L662.2 759.5 L665.1 733.9 L665.4 759.5 L667.6 731.3 L667.9 759.5 L670.9 735.9 L671.2 759.5 L673.2 735.0 L673.5 759.5 L675.9 731.8 L676.2 759.5 L678.4 734.8 L678.7 759.5 L681.7 731.2 L682.0 759.5 L684.6 731.2 L684.9 759.5 L687.7 732.7 L688.0 759.5 L690.9 735.9 L691.2 759.5 L693.7 736.0 L694.0 759.5 L696.3 731.4 L696.6 759.5 L699.2 731.2 L699.5 759.5 L701.6 733.0 L701.9 759.5 L704.6 731.8 L704.9 759.5 L706.8 735.3 L707.1 759.5 L709.4 735.8 L709.7 759.5 L712.7 732.9 L713.0 759.5 L715.4 733.6 L715.7 759.5 L718.4 734.0 L718.7 759.5 L721.3 734.1 L721.6 759.5 L724.6 733.5 L724.9 759.5 L727.3 734.6 L727.6 759.5 L729.8 732.5 L730.1 759.5 L733.2 733.6 L733.5 759.5 L736.0 731.1 L736.3 759.5 L738.7 733.9 L739.0 759.5 L741.0 734.1 L741.3 759.5 L743.9 731.3 L744.2 759.5 L746.9 733.3 L747.2 759.5 L749.9 732.8 L750.2 759.5 L752.9 734.7 L753.2 759.5 L755.2 731.3 L755.5 759.5 L758.2 735.8 L758.5 759.5 L760.7 733.3 L761.0 759.5 L763.6 732.6 L763.9 759.5 L766.2 732.6 L766.5 759.5 L768.9 734.0 L769.2 759.5 L771.4 732.9 L771.7 759.5 L774.6 731.1 L774.9 759.5 L777.4 734.7 L777.7 759.5 L780.0 732.1 L780.3 759.5 L783.2 732.2 L783.5 759.5 L785.6 733.2 L785.9 759.5 L788.6 731.5 L788.9 759.5 L791.2 732.7 L791.5 759.5 L794.4 733.2 L794.7 759.5 L797.7 731.8 L798.0 759.5 L800.3 734.3 L800.6 759.5 L803.5 733.3 L803.8 759.5 L806.0 731.6 L806.3 759.5 L808.8 732.0 L809.1 759.5 L812.0 735.2 L812.3 759.5 L814.4 732.4 L814.7 759.5 L817.6 734.2 L817.9 759.5 L820.7 732.7 L821.0 759.5 L823.1 732.5 L823.4 759.5 L826.3 732.4 L826.6 759.5 L828.9 733.1 L829.2 759.5 L831.6 733.0 L831.9 759.5 L834.9 731.8 L835.2 759.5 L837.1 735.7 L837.4 759.5 L840.3 735.9 L840.6 759.5 L843.1 735.8 L843.4 759.5 L846.4 732.1 L846.7 759.5 L849.5 735.2 L849.8 759.5 L852.5 733.6 L852.8 759.5 L855.0 732.7 L855.3 759.5 L857.5 731.3 L857.8 759.5 L860.4 732.4 L860.7 759.5 L863.6 731.2 L863.9 759.5 L866.8 734.5 L867.1 759.5 L870.2 735.5 L870.5 759.5 L873.4 733.9 L873.7 759.5 L875.7 734.7 L876.0 759.5 L878.1 732.5 L878.4 759.5 L881.1 733.6 L881.4 759.5 L883.8 735.7 L884.1 759.5 L886.7 732.7 L887.0 759.5 L889.2 735.3 L889.5 759.5 L892.0 734.9 L892.3 759.5 L894.6 732.0 L894.9 759.5 L897.4 735.1 L897.7 759.5 L899.8 735.0 L900.1 759.5 L903.1 735.0 L903.4 759.5 L906.3 731.0 L906.6 759.5 L909.3 735.3 L909.6 759.5 L911.5 732.4 L911.8 759.5 L914.1 733.6 L914.4 759.5 L916.8 733.4 L917.1 759.5 L919.9 731.0 L920.2 759.5 L922.2 731.6 L922.5 759.5 L924.5 731.3 L924.8 759.5 L927.9 735.3 L928.2 759.5 L930.2 733.5 L930.5 759.5 L932.8 732.6 L933.1 759.5 L935.4 734.2 L935.7 759.5 L938.3 732.8 L938.6 759.5 L940.7 732.6 L941.0 759.5 L943.1 733.8 L943.4 759.5 L946.1 732.9 L946.4 759.5 L948.4 731.9 L948.7 759.5 L951.1 734.0 L951.4 759.5 L954.2 732.9 L954.5 759.5 L957.4 734.1 L957.7 759.5 L960.1 732.9 L960.4 759.5 L962.9 734.5 L963.2 759.5 L965.6 734.5 L965.9 759.5 L968.3 732.2 L968.6 759.5 L971.2 734.5 L971.5 759.5 L973.5 733.1 L973.8 759.5 L976.2 735.4 L976.5 759.5 L979.5 732.9 L979.8 759.5 L982.8 735.0 L983.1 759.5 L985.3 733.3 L985.6 759.5 L987.6 735.1 L987.9 759.5 L990.6 735.4 L990.9 759.5 L993.8 734.3 L994.1 759.5 L996.9 733.8 L997.2 759.5 L999.2 733.9 L999.5 759.5 L1001.4 731.7 L1001.7 759.5 L1004.5 731.2 L1004.8 759.5 L1006.8 731.5 L1007.1 759.5 L1010.1 731.9 L1010.4 759.5 L1012.3 735.2 L1012.6 759.5 L1014.7 735.2 L1015.0 759.5 L1017.7 735.2 L1018.0 759.5 L1021.0 733.9 L1021.3 759.5 L1024.2 731.2 L1024.5 759.5 L1027.3 733.6 L1027.6 759.5 L1030.4 731.5 L1030.7 759.5 L1033.5 735.7 L1033.8 759.5 L1035.7 732.6 L1036.0 759.5 L1038.6 735.1 L1038.9 759.5 L1041.1 731.9 L1041.4 759.5 L1043.6 734.1 L1043.9 759.5 L1046.7 733.0 L1047.0 759.5 L1049.3 733.0 L1049.6 759.5 L1052.0 733.1 L1052.3 759.5 L1054.3 733.5 L1054.6 759.5 L1057.6 733.1 L1057.9 759.5 L1060.7 731.8 L1061.0 759.5 L1063.8 734.8 L1064.1 759.5 L1066.8 733.6 L1067.1 759.5 L1069.6 734.2 L1069.9 759.5 L1072.8 731.7 L1073.1 759.5 L1075.1 734.7 L1075.4 759.5 L1078.4 733.6 L1078.7 759.5 L1081.2 734.6 L1081.5 759.5 L1083.6 732.3 L1083.9 759.5 L1086.0 733.9 L1086.3 759.5 L1088.6 732.2 L1088.9 759.5 L1091.6 735.8 L1091.9 759.5 L1094.2 734.5 L1094.5 759.5 L1096.9 735.3 L1097.2 759.5 L1099.8 732.3 L1100.1 759.5 L1102.3 731.1 L1102.6 759.5 L1105.0 732.9 L1105.3 759.5 L1107.4 732.8 L1107.7 759.5 L1110.0 734.9 L1110.3 759.5 L1112.4 736.0 L1112.7 759.5 L1115.2 734.0 L1115.5 759.5 L1117.9 735.2 L1118.2 759.5 L1121.1 733.8 L1121.4 759.5 L1123.9 734.6 L1124.2 759.5 L1127.1 733.0 L1127.4 759.5 L1130.2 735.8 L1130.5 759.5 L1133.0 732.1 L1133.3 759.5 L1135.4 734.6 L1135.7 759.5 L1138.5 735.8 L1138.8 759.5 L1141.7 732.2 L1142.0 759.5 L1144.1 732.3 L1144.4 759.5 L1146.5 734.5 L1146.8 759.5 L1149.8 735.5 L1150.1 759.5 L1152.3 735.3 L1152.6 759.5 L1154.8 733.1 L1155.1 759.5 L1157.9 731.4 L1158.2 759.5 L1160.2 735.2 L1160.5 759.5 L1162.8 732.8 L1163.1 759.5 L1165.7 734.4 L1166.0 759.5 L1167.9 732.7 L1168.2 759.5 L1170.6 733.4 L1170.9 759.5 L1173.1 733.9 L1173.4 759.5 L1176.4 733.0 L1176.7 759.5 L1179.3 731.6 L1179.6 759.5 L1181.8 734.3 L1182.1 759.5 L1184.1 735.4 L1184.4 759.5 L1187.4 731.5 L1187.7 759.5 L1190.7 732.9 L1191.0 759.5 L1193.9 734.8 L1194.2 759.5 L1196.4 734.4 L1196.7 759.5 L1199.4 735.0 L1199.7 759.5 L1201.9 734.8 L1202.2 759.5 L1205.3 734.4 L1205.6 759.5 L1208.1 731.6 L1208.4 759.5 L1210.9 732.8 L1211.2 759.5 L1214.0 734.4 L1214.3 759.5 L1216.9 731.9 L1217.2 759.5 L1219.8 734.2 L1220.1 759.5 L1222.3 735.4 L1222.6 759.5 L1225.2 731.6 L1225.5 759.5 L1228.6 731.7 L1228.9 759.5 L1231.2 734.6 L1231.5 759.5 L1234.1 733.8 L1234.4 759.5 L1237.1 733.3 L1237.4 759.5 L1239.6 731.9 L1239.9 759.5 L1241.9 734.6 L1242.2 759.5 L1245.0 733.7 L1245.3 759.5 L1248.1 732.8 L1248.4 759.5 L1250.6 732.9 L1250.9 759.5 L1253.9 731.2 L1254.2 759.5 L1256.7 732.2 L1257.0 759.5 L1259.8 732.8 L1260.1 759.5 L1262.4 733.0 L1262.7 759.5 L1265.2 734.9 L1265.5 759.5 L1267.9 735.2 L1268.2 759.5 L1270.2 732.4 L1270.5 759.5 L1272.5 731.6 L1272.8 759.5 L1275.7 734.6 L1276.0 759.5 L1278.1 731.9 L1278.4 759.5 L1280.8 734.7 L1281.1 759.5 L1284.0 734.7 L1284.3 759.5 L1286.9 731.7 L1287.2 759.5 L1289.5 732.0 L1289.8 759.5 L1292.4 733.8 L1292.7 759.5 L1294.8 732.3 L1295.1 759.5 L1298.0 731.2 L1298.3 759.5 L1301.1 735.5 L1301.4 759.5 L1304.5 732.9 L1304.8 759.5 L1307.3 733.9 L1307.6 759.5 L1310.3 735.9 L1310.6 759.5 L1313.3 732.5 L1313.6 759.5 L1316.5 733.4 L1316.8 759.5 L1319.5 734.6 L1319.8 759.5 L1321.2 734.9 L1321.5 759.5" fill="none" stroke="#ff30ff" stroke-width="1.25" opacity=".72"/>
  <path d="M571.5 731 H575.4 V759.5 H576.4 V731 H580.2 V759.5 H581.1 V731 H584.9 V759.5 H585.8 V731 H589.6 V759.5 H590.5 V731 H593.9 V759.5 H594.8 V731 H598.6 V759.5 H599.5 V731 H602.7 V759.5 H603.6 V731 H607.3 V759.5 H608.3 V731 H612.2 V759.5 H613.2 V731 H616.9 V759.5 H617.8 V731 H621.6 V759.5 H622.6 V731 H626.9 V759.5 H627.9 V731 H632.1 V759.5 H633.2 V731 H636.5 V759.5 H637.4 V731 H641.4 V759.5 H642.5 V731 H646.4 V759.5 H647.3 V731 H650.6 V759.5 H651.4 V731 H655.0 V759.5 H655.9 V731 H659.4 V759.5 H660.2 V731 H663.5 V759.5 H664.4 V731 H668.2 V759.5 H669.1 V731 H673.3 V759.5 H674.4 V731 H678.0 V759.5 H678.9 V731 H683.0 V759.5 H684.1 V731 H688.1 V759.5 H689.1 V731 H692.4 V759.5 H693.2 V731 H697.4 V759.5 H698.4 V731 H702.3 V759.5 H703.3 V731 H707.5 V759.5 H708.6 V731 H712.6 V759.5 H713.6 V731 H717.6 V759.5 H718.6 V731 H722.2 V759.5 H723.1 V731 H727.2 V759.5 H728.2 V731 H732.5 V759.5 H733.5 V731 H737.7 V759.5 H738.7 V731 H742.4 V759.5 H743.3 V731 H747.4 V759.5 H748.4 V731 H752.2 V759.5 H753.1 V731 H756.4 V759.5 H757.2 V731 H760.5 V759.5 H761.3 V731 H764.6 V759.5 H765.4 V731 H768.8 V759.5 H769.7 V731 H773.1 V759.5 H773.9 V731 H777.7 V759.5 H778.6 V731 H782.6 V759.5 H783.6 V731 H787.4 V759.5 H788.3 V731 H792.0 V759.5 H792.9 V731 H796.9 V759.5 H797.8 V731 H801.4 V759.5 H802.3 V731 H806.0 V759.5 H806.9 V731 H811.0 V759.5 H812.0 V731 H815.6 V759.5 H816.5 V731 H819.9 V759.5 H820.8 V731 H825.0 V759.5 H826.1 V731 H830.1 V759.5 H831.1 V731 H834.7 V759.5 H835.6 V731 H839.2 V759.5 H840.1 V731 H843.9 V759.5 H844.8 V731 H848.7 V759.5 H849.7 V731 H853.1 V759.5 H854.0 V731 H857.2 V759.5 H858.0 V731 H861.4 V759.5 H862.3 V731 H866.4 V759.5 H867.4 V731 H870.7 V759.5 H871.6 V731 H875.3 V759.5 H876.2 V731 H879.6 V759.5 H880.5 V731 H883.9 V759.5 H884.8 V731 H888.2 V759.5 H889.0 V731 H892.7 V759.5 H893.6 V731 H897.0 V759.5 H897.8 V731 H901.1 V759.5 H901.9 V731 H905.2 V759.5 H906.0 V731 H909.4 V759.5 H910.3 V731 H914.0 V759.5 H914.9 V731 H918.2 V759.5 H919.0 V731 H922.3 V759.5 H923.1 V731 H926.8 V759.5 H927.7 V731 H931.3 V759.5 H932.3 V731 H936.2 V759.5 H937.2 V731 H940.5 V759.5 H941.3 V731 H945.0 V759.5 H945.9 V731 H949.5 V759.5 H950.4 V731 H953.7 V759.5 H954.5 V731 H958.8 V759.5 H959.8 V731 H963.3 V759.5 H964.1 V731 H967.4 V759.5 H968.3 V731 H972.0 V759.5 H972.9 V731 H976.3 V759.5 H977.2 V731 H981.1 V759.5 H982.0 V731 H985.6 V759.5 H986.5 V731 H989.8 V759.5 H990.7 V731 H993.9 V759.5 H994.8 V731 H998.8 V759.5 H999.8 V731 H1003.3 V759.5 H1004.2 V731 H1008.2 V759.5 H1009.3 V731 H1013.0 V759.5 H1013.9 V731 H1018.2 V759.5 H1019.2 V731 H1022.8 V759.5 H1023.6 V731 H1027.1 V759.5 H1028.0 V731 H1031.5 V759.5 H1032.4 V731 H1036.5 V759.5 H1037.5 V731 H1041.4 V759.5 H1042.4 V731 H1046.0 V759.5 H1046.9 V731 H1050.2 V759.5 H1051.0 V731 H1055.0 V759.5 H1056.0 V731 H1060.2 V759.5 H1061.3 V731 H1065.2 V759.5 H1066.1 V731 H1069.3 V759.5 H1070.1 V731 H1073.4 V759.5 H1074.2 V731 H1077.5 V759.5 H1078.3 V731 H1081.7 V759.5 H1082.6 V731 H1085.8 V759.5 H1086.6 V731 H1089.9 V759.5 H1090.7 V731 H1094.6 V759.5 H1095.6 V731 H1099.8 V759.5 H1100.9 V731 H1104.3 V759.5 H1105.1 V731 H1109.4 V759.5 H1110.5 V731 H1114.2 V759.5 H1115.2 V731 H1119.3 V759.5 H1120.3 V731 H1124.5 V759.5 H1125.6 V731 H1129.8 V759.5 H1130.9 V731 H1134.1 V759.5 H1134.9 V731 H1138.5 V759.5 H1139.4 V731 H1143.2 V759.5 H1144.2 V731 H1148.5 V759.5 H1149.5 V731 H1152.8 V759.5 H1153.7 V731 H1157.2 V759.5 H1158.1 V731 H1162.2 V759.5 H1163.3 V731 H1166.6 V759.5 H1167.4 V731 H1171.1 V759.5 H1172.0 V731 H1175.5 V759.5 H1176.4 V731 H1180.4 V759.5 H1181.4 V731 H1185.6 V759.5 H1186.7 V731 H1190.1 V759.5 H1190.9 V731 H1195.0 V759.5 H1196.0 V731 H1200.0 V759.5 H1201.0 V731 H1205.1 V759.5 H1206.2 V731 H1210.0 V759.5 H1210.9 V731 H1215.2 V759.5 H1216.2 V731 H1219.8 V759.5 H1220.7 V731 H1224.4 V759.5 H1225.3 V731 H1228.8 V759.5 H1229.6 V731 H1233.7 V759.5 H1234.7 V731 H1238.5 V759.5 H1239.4 V731 H1242.9 V759.5 H1243.8 V731 H1247.2 V759.5 H1248.0 V731 H1252.0 V759.5 H1253.0 V731 H1256.9 V759.5 H1257.9 V731 H1261.9 V759.5 H1262.9 V731 H1266.5 V759.5 H1267.4 V731 H1271.2 V759.5 H1272.1 V731 H1275.5 V759.5 H1276.3 V731 H1280.3 V759.5 H1281.3 V731 H1284.5 V759.5 H1285.3 V731 H1289.1 V759.5 H1290.0 V731 H1294.0 V759.5 H1295.1 V731 H1299.0 V759.5 H1300.0 V731 H1303.3 V759.5 H1304.1 V731 H1307.6 V759.5 H1308.5 V731 H1312.6 V759.5 H1313.7 V731 H1317.6 V759.5 H1318.6 V731 H1322.7 V759.5 H1323.8 V731" fill="none" stroke="#8a3cb4" stroke-width=".5" opacity=".55"/>
  <path d="M571.5 731H1321" fill="none" stroke="#7a2aa0" stroke-width=".9" stroke-dasharray="3.4 1.1" opacity=".8"/>
  <path d="M571.5 759.6H1321" fill="none" stroke="#b060d0" stroke-width=".8" stroke-dasharray="1.1 3.4" stroke-dashoffset="-3.4" opacity=".7"/>
  </g>
  <path d="M1321.5 729.5V773" stroke="#333" stroke-width="1" fill="none"/>
  <rect x="1317.5" y="737" width="5" height="18" fill="#1c1c1c"/>
  <rect x="1319" y="763" width="3" height="8" fill="#999"/>
  <path d="M571 774.3H1322" stroke="#777" stroke-width="1.6" fill="none"/>
  <path d="M571.5 774V778M639.5 774V778M768.5 774V778M892.5 774V778M1021.5 774V778M1149.5 774V778M1265.5 774V778M1321.5 774V778" stroke="#555" stroke-width="1" fill="none"/>
  <g font-size="10" fill="#333" text-anchor="middle">
    <text x="639.8" y="787.8">Oct</text><text x="768.5" y="787.8">Nov</text><text x="892.5" y="787.8">Dec</text><text x="1021" y="787.8">2022</text><text x="1149.5" y="787.8">Feb</text><text x="1265.8" y="787.8">Mar</text>
  </g>
</svg>
<!-- series labels -->
<div class="a btn" style="left:571px;top:141px;width:96px;height:25px;border-color:#e2e2e2"></div>
<div class="a" style="left:575.5px;top:148.5px;width:10px;height:10px;border-radius:5px;background:#4b0082"></div>
<div class="a t" style="left:589.5px;top:148.5px;font-size:10px;color:#444;letter-spacing:-0.3px">BA:ACTIVE.1</div>
<svg class="a" style="left:651px;top:147px" width="13" height="13" viewBox="-6.5 -6.5 13 13"><path d="M0 -4V4M-4 0H4" fill="none" stroke="#333" stroke-width="1.2"/><path d="M-2.2 -3.4L0 -5.8L2.2 -3.4ZM-2.2 3.4L0 5.8L2.2 3.4ZM-3.4 -2.2L-5.8 0L-3.4 2.2ZM3.4 -2.2L5.8 0L3.4 2.2Z" fill="#333"/></svg>
<div class="a btn" style="left:571px;top:405px;width:91px;height:25px;border-color:#e2e2e2"></div>
<div class="a" style="left:575.5px;top:412.5px;width:10px;height:10px;border-radius:5px;background:#ff00ff"></div>
<div class="a t" style="left:589.5px;top:412.5px;font-size:10px;color:#444;letter-spacing:-0.3px">BA:CONC.1</div>
<svg class="a" style="left:645px;top:411px" width="13" height="13" viewBox="-6.5 -6.5 13 13"><path d="M0 -4V4M-4 0H4" fill="none" stroke="#333" stroke-width="1.2"/><path d="M-2.2 -3.4L0 -5.8L2.2 -3.4ZM-2.2 3.4L0 5.8L2.2 3.4ZM-3.4 -2.2L-5.8 0L-3.4 2.2ZM3.4 -2.2L5.8 0L3.4 2.2Z" fill="#333"/></svg>

<!-- ===== time controls ===== -->
<div class="a btn" style="left:571px;top:690px;width:32px;height:32px;border-color:#e2e2e2"></div>
<svg class="a" style="left:585px;top:703px" width="5" height="8" viewBox="0 0 5 8"><path d="M4 .4V7.4L.4 3.9Z" fill="#444"/></svg>
<div class="a btn" style="left:607px;top:690px;width:33px;height:32px;border-color:#e2e2e2"></div>
<div class="a btn" style="left:644px;top:690px;width:33px;height:32px;border-color:#c9d5e1"></div>
<div class="a btn" style="left:859px;top:690px;width:32px;height:32px;border-color:#e2e2e2"></div>
<div class="a btn" style="left:895px;top:690px;width:103px;height:32px;border-color:#e2e2e2"></div>
<div class="a vdiv" style="left:966.5px;top:691px;height:30px;background:#e2e2e2"></div>
<div class="a btn" style="left:1002px;top:690px;width:32px;height:32px;border-color:#f0f0f0"></div>
<div class="a btn" style="left:1221px;top:690px;width:32px;height:32px;border-color:#e2e2e2"></div>
<div class="a btn" style="left:1258px;top:690px;width:32px;height:32px;border-color:#c9d5e1;border-radius:3px 0 0 3px"></div>
<div class="a btn" style="left:1289px;top:690px;width:33px;height:32px;border-color:#e2e2e2;border-radius:0 3px 3px 0"></div>
<svg class="a" style="left:1303px;top:703px" width="5" height="8" viewBox="0 0 5 8"><path d="M1 .4V7.4L4.6 3.9Z" fill="#444"/></svg>
<div class="a t" style="left:908.5px;top:700px;font-size:14px;letter-spacing:-0.1px">8 hours</div>
<svg class="a" style="left:571px;top:690px" width="752" height="32" viewBox="571 690 752 32">
  <g fill="none" stroke="#7a7a7a" stroke-width="1">
    <rect x="617.5" y="699.5" width="13" height="13" rx="1"/><path d="M617.5 703.5H630.5M621 698V701M627 698V701"/><rect x="625.5" y="707.5" width="3" height="3" fill="#8a8a8a"/>
  </g>
  <g fill="none" stroke="#7a7a7a" stroke-width="1"><circle cx="661" cy="706" r="6.6"/><path d="M660.5 701.8V706.5H665"/></g>
  <g fill="none" stroke="#7a7a7a" stroke-width="1" transform="translate(614 0)"><rect x="617.5" y="699.5" width="13" height="13" rx="1"/><path d="M617.5 703.5H630.5M621 698V701M627 698V701"/><rect x="625.5" y="707.5" width="3" height="3" fill="#8a8a8a"/></g>
  <g fill="none" stroke="#7a7a7a" stroke-width="1" transform="translate(614 0)"><circle cx="661" cy="706" r="6.6"/><path d="M660.5 701.8V706.5H665"/></g>
  <!-- chart icon -->
  <g fill="none" stroke="#555" stroke-width="1"><path d="M867.5 699V714.5H883.5"/><path d="M868 707.5C872 704.5 874 705.5 877 704C879 703 880 702 881 700.5" stroke-width="1.2"/><path d="M868 713.5L871 712V711H874L876 709.5H879L882 708" stroke-width=".9"/></g>
  <!-- lock -->
  <g fill="none" stroke="#555" stroke-width="1.4"><rect x="977.7" y="706.2" width="9.4" height="7" rx=".8"/><path d="M979.8 706V703.6A2.7 2.7 0 0 1 985.2 703.6V704.2"/></g><circle cx="982.4" cy="709.8" r="1" fill="#555"/>
  <!-- history -->
  <g fill="none" stroke="#d8d8d8" stroke-width="1.2"><path d="M1013.4 707A5.6 5.6 0 1 1 1015 711"/><path d="M1019 703.8V707.3L1021.6 708.8"/></g><path d="M1010.6 706.2H1016L1013.3 709.4Z" fill="#d8d8d8"/>
</svg>
<!-- range buttons -->
<div class="a btn" style="left:571px;top:798px;width:245px;height:24px;border-color:#e2e2e2"></div>
<div class="a" style="left:712.5px;top:799px;width:34px;height:22px;background:#eff4fa"></div>
<div class="a vdiv" style="left:605px;top:799px;height:22px;background:#e2e2e2"></div>
<div class="a vdiv" style="left:641px;top:799px;height:22px;background:#e2e2e2"></div>
<div class="a vdiv" style="left:676px;top:799px;height:22px;background:#e2e2e2"></div>
<div class="a vdiv" style="left:712px;top:799px;height:22px;background:#e2e2e2"></div>
<div class="a vdiv" style="left:746px;top:799px;height:22px;background:#e2e2e2"></div>
<div class="a vdiv" style="left:778px;top:799px;height:22px;background:#e2e2e2"></div>
<div class="a t rb" style="left:572px;width:33px">1D</div>
<div class="a t rb" style="left:606px;width:35px">1W</div>
<div class="a t rb" style="left:642px;width:34px">1M</div>
<div class="a t rb" style="left:677px;width:35px">3M</div>
<div class="a t rb" style="left:713px;width:33px;color:#1a62b5">6M</div>
<div class="a t rb" style="left:747px;width:31px">1Y</div>
<div class="a t rb" style="left:779px;width:37px">ALL</div>
<div class="a btn" style="left:832px;top:798px;width:104px;height:24px;border-color:#e2e2e2"></div>
<div class="a vdiv" style="left:912px;top:799px;height:22px;background:#e2e2e2"></div>
<div class="a t" style="left:841.5px;top:804.7px;font-size:12px;letter-spacing:-0.3px">CUSTOM</div>
<svg class="a" style="left:898px;top:808px" width="9" height="5" viewBox="0 0 9 5"><path d="M.2 3.9H7.8L4 .1Z" fill="#9a9a9a"/></svg>
<svg class="a" style="left:917px;top:805px" width="15" height="13" viewBox="917 805 15 13"><rect x="919.1" y="807" width="10.2" height="8" rx="1.6" fill="none" stroke="#999" stroke-width="1.3"/><path d="M924.2 807.6V809.1M924.2 812.9V814.4M919.7 811H921.3M927.1 811H928.7" stroke="#999" stroke-width="1.5" fill="none"/></svg>

<!-- ===== annotation ===== -->
<svg class="a" style="left:886px;top:39px" width="120" height="32" viewBox="0 0 120 32"><g fill="none" stroke="#6a0cf8" stroke-width="2"><path d="M0 1H120M0 31H120" stroke-dasharray="11 3.75" stroke-dashoffset="4.5"/><path d="M1 0V32M119 0V32" stroke-dasharray="11.5 3.75" stroke-dashoffset="5"/></g></svg>
<svg class="a" style="left:925px;top:68px" width="24" height="148" viewBox="925 68 24 148"><path d="M937.4 71.5V213" stroke="#6a0cf8" stroke-width="2" fill="none"/><path d="M931 78L937.4 71.2L943.8 78" stroke="#6a0cf8" stroke-width="2" fill="none"/></svg>
<div class="a" style="left:842px;top:212px;width:209px;height:32px;background:#fff;border:2px solid #6a0cf8;border-radius:5px"></div>
<div class="a t" style="left:842px;top:221px;width:209px;text-align:center;font-size:16px;font-weight:700;color:#6a0cf8;letter-spacing:-0.45px">Open Work organizer</div>

</div>
</body>
</html>
